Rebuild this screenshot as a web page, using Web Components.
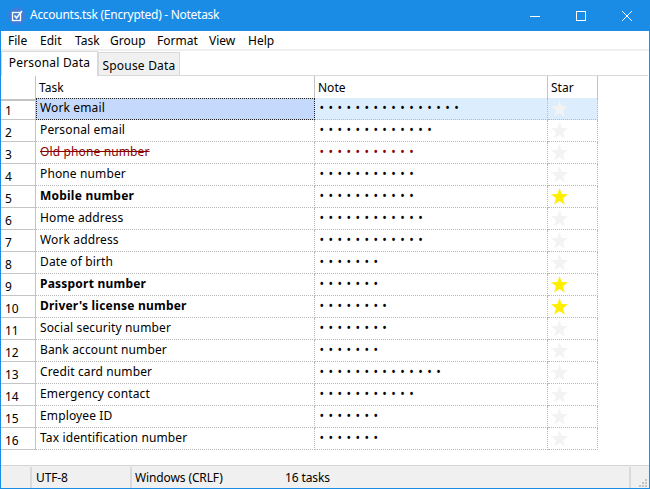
<!DOCTYPE html>
<html lang="en">
<head>
<meta charset="utf-8">
<title>Notetask</title>
<style>
  html, body { margin: 0; padding: 0; background: #fff; }
  body { font: 12px "Noto Sans", "Open Sans", sans-serif; color: #000; overflow: hidden; }
</style>
</head>
<body>
<note-window>
  <title-bar slot="title">Accounts.tsk (Encrypted) - Notetask</title-bar>
  <menu-bar slot="menu">
    <menu-item style="--w:32px">File</menu-item>
    <menu-item style="--w:35px">Edit</menu-item>
    <menu-item style="--w:35px">Task</menu-item>
    <menu-item style="--w:47px">Group</menu-item>
    <menu-item style="--w:52px">Format</menu-item>
    <menu-item style="--w:39px">View</menu-item>
    <menu-item style="--w:40px">Help</menu-item>
  </menu-bar>
  <tab-strip slot="tabs">
    <tab-item active style="--w:97px">Personal Data</tab-item>
    <tab-item style="--w:82px">Spouse Data</tab-item>
  </tab-strip>
  <task-grid slot="grid">
    <task-row num="1" dots="16" selected>Work email</task-row>
    <task-row num="2" dots="13">Personal email</task-row>
    <task-row num="3" dots="11" done>Old phone number</task-row>
    <task-row num="4" dots="11">Phone number</task-row>
    <task-row num="5" dots="11" starred>Mobile number</task-row>
    <task-row num="6" dots="12">Home address</task-row>
    <task-row num="7" dots="12">Work address</task-row>
    <task-row num="8" dots="7">Date of birth</task-row>
    <task-row num="9" dots="7" starred>Passport number</task-row>
    <task-row num="10" dots="8" starred>Driver's license number</task-row>
    <task-row num="11" dots="8">Social security number</task-row>
    <task-row num="12" dots="7">Bank account number</task-row>
    <task-row num="13" dots="14">Credit card number</task-row>
    <task-row num="14" dots="11">Emergency contact</task-row>
    <task-row num="15" dots="7">Employee ID</task-row>
    <task-row num="16" dots="7">Tax identification number</task-row>
  </task-grid>
  <status-bar slot="status"></status-bar>
</note-window>

<script>
(() => {
  const COLS = "35px 279px 233px 50px";

  class NoteWindow extends HTMLElement {
    connectedCallback() {
      if (this.shadowRoot) return;
      this.attachShadow({ mode: "open" }).innerHTML = `
        <style>
          :host {
            display: flex;
            flex-direction: column;
            box-sizing: border-box;
            width: 650px;
            height: 489px;
            border: solid #1b8ce6;
            border-width: 0 1px 1px;
            background: #fff;
          }
          .body { flex: 1; display: flex; flex-direction: column; min-height: 0; }
        </style>
        <slot name="title"></slot>
        <slot name="menu"></slot>
        <slot name="tabs"></slot>
        <div class="body"><slot name="grid"></slot></div>
        <slot name="status"></slot>`;
    }
  }

  class TitleBar extends HTMLElement {
    connectedCallback() {
      if (this.shadowRoot) return;
      this.attachShadow({ mode: "open" }).innerHTML = `
        <style>
          :host {
            display: flex;
            align-items: center;
            height: 31px;
            margin: 0 -1px;
            background: #1b8ce6;
            color: #fff;
          }
          .logo { width: 30px; height: 30px; flex: none; display: block; }
          .text { flex: 1; white-space: nowrap; line-height: 30px; padding-bottom: 1px; letter-spacing: -0.28px; }
          button {
            width: 46px;
            height: 31px;
            padding: 0;
            border: 0;
            background: none;
            display: flex;
            align-items: center;
            justify-content: center;
          }
          svg.ctl { width: 12px; height: 12px; display: block; }
        </style>
        <svg class="logo" viewBox="0 0 30 30">
          <circle cx="17" cy="15" r="9" fill="#3b7fd8"/>
          <rect x="12.5" y="11.5" width="8" height="8" fill="none" stroke="#fff" stroke-width="1.3"/>
          <path d="M14.5 14.5l2 2.5L22 10" fill="none" stroke="#fff" stroke-width="1.5"/>
        </svg>
        <span class="text"><slot></slot></span>
        <button aria-label="Minimize"><svg class="ctl" viewBox="0 0 12 12"><path d="M1 6.5h10" stroke="#fff" fill="none"/></svg></button>
        <button aria-label="Maximize"><svg class="ctl" viewBox="0 0 12 12"><rect x="1.5" y="1.5" width="9" height="9" stroke="#fff" fill="none"/></svg></button>
        <button aria-label="Close"><svg class="ctl" viewBox="0 0 12 12"><path d="M1 1l10 10M11 1L1 11" stroke="#fff" fill="none"/></svg></button>`;
    }
  }

  class MenuBar extends HTMLElement {
    connectedCallback() {
      if (this.shadowRoot) return;
      this.attachShadow({ mode: "open" }).innerHTML = `
        <style>
          :host {
            display: flex;
            height: 18px;
            padding-left: 7px;
            border-bottom: 2px solid #f0f0f0;
          }
        </style>
        <slot></slot>`;
    }
  }

  class MenuItem extends HTMLElement {
    connectedCallback() {
      if (this.shadowRoot) return;
      this.attachShadow({ mode: "open" }).innerHTML = `
        <style>:host { display: block; width: var(--w); line-height: 20px; white-space: nowrap; }</style>
        <slot></slot>`;
    }
  }

  class TabStrip extends HTMLElement {
    connectedCallback() {
      if (this.shadowRoot) return;
      this.attachShadow({ mode: "open" }).innerHTML = `
        <style>
          :host {
            display: flex;
            align-items: flex-end;
            height: 24px;
            border-bottom: 1px solid #d9d9d9;
            margin-right: 1px;
          }
        </style>
        <slot></slot>`;
    }
  }

  class TabItem extends HTMLElement {
    connectedCallback() {
      if (this.shadowRoot) return;
      this.attachShadow({ mode: "open" }).innerHTML = `
        <style>
          :host {
            display: block;
            box-sizing: border-box;
            width: var(--w);
            height: 23px;
            border: 1px solid #d9d9d9;
            border-bottom: 0;
            background: #f0f0f0;
            line-height: 26px;
            text-align: center;
            white-space: nowrap;
            letter-spacing: 0.2px;
          }
          :host([active]) {
            height: 25px;
            margin-bottom: -1px;
            background: #fff;
            line-height: 22px;
          }
        </style>
        <slot></slot>`;
    }
  }

  class TaskGrid extends HTMLElement {
    connectedCallback() {
      if (this.shadowRoot) return;
      this.attachShadow({ mode: "open" }).innerHTML = `
        <style>
          :host { display: block; }
          .head {
            display: grid;
            grid-template-columns: ${COLS};
            height: 22px;
          }
          .head div {
            box-sizing: border-box;
            border-right: 1px solid #c4c4c4;
            border-bottom: 2px solid #c4c4c4;
            padding-left: 3px;
            line-height: 23px;
          }
        </style>
        <div class="head"><div></div><div>Task</div><div>Note</div><div>Star</div></div>
        <slot></slot>`;
    }
  }

  class TaskRow extends HTMLElement {
    connectedCallback() {
      if (this.shadowRoot) return;
      const num = this.getAttribute("num");
      const mask = "\u2022".repeat(Number(this.getAttribute("dots")));
      this.attachShadow({ mode: "open" }).innerHTML = `
        <style>
          :host {
            display: grid;
            grid-template-columns: ${COLS};
            height: 22px;
          }
          .num, .cell {
            box-sizing: border-box;
            height: 22px;
            line-height: 19px;
            white-space: nowrap;
          }
          .num {
            border-right: 1px solid #c4c4c4;
            border-bottom: 1px solid #c4c4c4;
            padding: 3px 0 0 4px;
          }
          .cell {
            border-right: 1px dotted #b8b8b8;
            border-bottom: 1px dotted #b8b8b8;
            padding-left: 4px;
          }
          .task { letter-spacing: 0.13px; }
          .mask { letter-spacing: 4.47px; line-height: 20px; padding-left: 4.5px; }
          .star { display: flex; align-items: center; padding-left: 3px; }
          .star svg { width: 17px; height: 17px; display: block; fill: #f3f3f3; }
          :host([starred]) .star svg { fill: #ffee00; }
          :host([starred]) .task { font-weight: 700; letter-spacing: 0.22px; }
          :host([done]) .task { color: #8b0000; text-decoration: line-through; }
          :host([done]) .mask { color: #8b0000; }
          :host([selected]) .cell { background: #dcedfd; }
          :host([selected]) .task {
            background: #c4d9fb;
            outline: 1px dotted #222;
            outline-offset: -1px;
            border-right-color: transparent;
          }
        </style>
        <div class="num">${num}</div>
        <div class="cell task"><slot></slot></div>
        <div class="cell mask">${mask}</div>
        <div class="cell star"><svg viewBox="0 0 16 16"><polygon points="8,0 10,5.6 16,5.8 11.3,9.6 13,15.6 8,12.2 3,15.6 4.7,9.6 0,5.8 6,5.6"/></svg></div>`;
    }
  }

  class StatusBar extends HTMLElement {
    connectedCallback() {
      if (this.shadowRoot) return;
      this.attachShadow({ mode: "open" }).innerHTML = `
        <style>
          :host {
            display: grid;
            grid-template-columns: 31px 100px 499px 18px;
            height: 22px;
            border-top: 1px solid #d4d4d4;
            background: #f0f0f0;
            letter-spacing: -0.12px;
          }
          .pane { border-right: 2px solid #dadada; margin: 1px 0; box-sizing: border-box; white-space: nowrap; line-height: 21px; padding-left: 4px; }
          .wide { display: grid; grid-template-columns: 150px 1fr; padding-left: 3px; }
          .grip { display: flex; align-items: flex-end; justify-content: flex-end; padding: 0 2px 2px 0; }
          .grip svg { width: 8px; height: 8px; display: block; fill: #c4c4c4; }
        </style>
        <div class="pane"></div>
        <div class="pane">UTF-8</div>
        <div class="pane wide"><span>Windows (CRLF)</span><span>16 tasks</span></div>
        <div class="grip"><svg viewBox="0 0 8 8"><path d="M6 0h2v2H6zM3 3h2v2H3zM6 3h2v2H6zM0 6h2v2H0zM3 6h2v2H3zM6 6h2v2H6z"/></svg></div>`;
    }
  }

  customElements.define("note-window", NoteWindow);
  customElements.define("title-bar", TitleBar);
  customElements.define("menu-bar", MenuBar);
  customElements.define("menu-item", MenuItem);
  customElements.define("tab-strip", TabStrip);
  customElements.define("tab-item", TabItem);
  customElements.define("task-grid", TaskGrid);
  customElements.define("task-row", TaskRow);
  customElements.define("status-bar", StatusBar);
})();
</script>
</body>
</html>
